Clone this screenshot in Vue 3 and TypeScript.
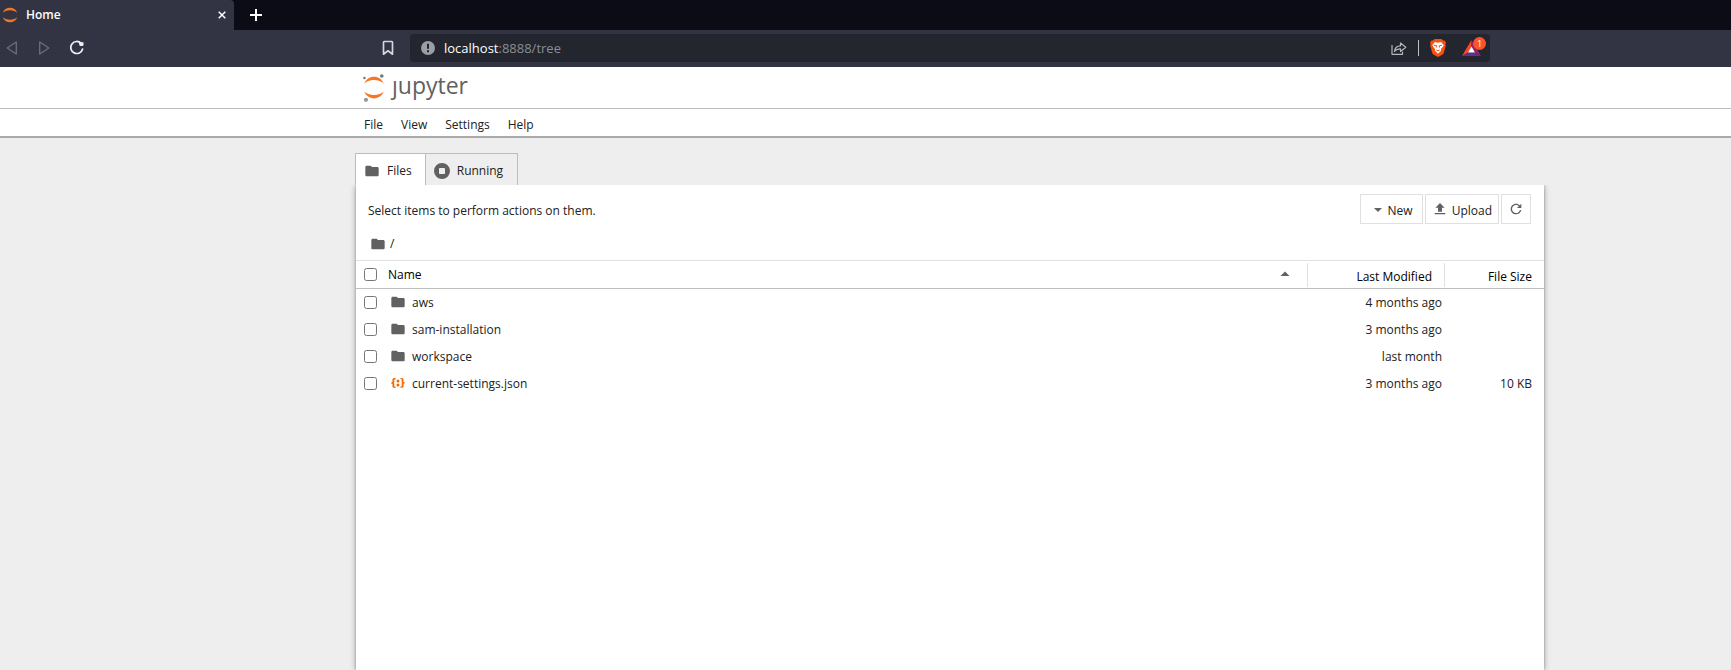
<script setup lang="ts">
import { ref, computed } from 'vue'

interface Entry {
  name: string
  kind: 'folder' | 'json'
  modified: string
  size: string
  checked: boolean
}

const menus: string[] = ['File', 'View', 'Settings', 'Help']
const address = ref('localhost:8888/tree')
const entries = ref<Entry[]>([
  { name: 'aws', kind: 'folder', modified: '4 months ago', size: '', checked: false },
  { name: 'sam-installation', kind: 'folder', modified: '3 months ago', size: '', checked: false },
  { name: 'workspace', kind: 'folder', modified: 'last month', size: '', checked: false },
  { name: 'current-settings.json', kind: 'json', modified: '3 months ago', size: '10 KB', checked: false },
])

const allChecked = computed<boolean>({
  get: () => entries.value.every((e) => e.checked),
  set: (value) => entries.value.forEach((e) => (e.checked = value)),
})

const folderPath =
  'M10 4H4c-1.1 0-1.99.9-1.99 2L2 18c0 1.1.9 2 2 2h16c1.1 0 2-.9 2-2V8c0-1.1-.9-2-2-2h-8l-2-2z'
</script>

<template>
  <div class="window">
    <div class="tabstrip">
      <div class="browser-tab">
        <svg class="favicon" width="16" height="16" viewBox="0 0 16 16" aria-hidden="true">
          <path d="M.8 5.8C2 2.6 4.700.8 8 .8s6 1.800 7.200 5C13.500 4.200 11 3.300 8 3.300S2.500 4.200.8 5.800z" fill="#f37726" />
          <path d="M.8 10.200C2 13.400 4.700 15.200 8 15.200s6-1.800 7.200-5c-1.700 1.600-4.200 2.500-7.200 2.500s-5.500-.9-7.200-2.500z" fill="#f37726" />
        </svg>
        <span class="tab-title">Home</span>
        <button class="chrome-btn close" aria-label="Close tab">
          <svg width="8" height="8" viewBox="0 0 8 8"><path d="M.7.7l6.600 6.600M7.300.7L.7 7.300" stroke="#fff" stroke-width="1.500" /></svg>
        </button>
      </div>
      <button class="chrome-btn new-tab" aria-label="New tab">
        <svg width="12" height="12" viewBox="0 0 12 12"><path d="M6 0v12M0 6h12" stroke="#fff" stroke-width="2" /></svg>
      </button>
    </div>

    <div class="navbar">
      <div class="nav-buttons">
        <button class="chrome-btn" aria-label="Back">
          <svg width="12" height="14" viewBox="0 0 12 14"><path d="M10.300 1v12L1.200 7z" fill="none" stroke="#6c6e7b" stroke-width="1.300" stroke-linejoin="round" /></svg>
        </button>
        <button class="chrome-btn" aria-label="Forward">
          <svg width="12" height="14" viewBox="0 0 12 14"><path d="M1.700 1v12l9.100-6z" fill="none" stroke="#6c6e7b" stroke-width="1.300" stroke-linejoin="round" /></svg>
        </button>
        <button class="chrome-btn" aria-label="Reload">
          <svg width="14" height="16" viewBox="1 0 14 16"><path d="M12.200 3.400A6 6 0 1 0 13.600 9" fill="none" stroke="#f0f0f3" stroke-width="1.700" stroke-linecap="round" /><path d="M9.800 2.200h4.700v2.600q0 1.200-1.200 1.200h-1.700q-1.300 0-1.300-1.200z" fill="#f0f0f3" /></svg>
        </button>
      </div>
      <button class="chrome-btn bookmark" aria-label="Bookmark this page">
        <svg width="12" height="16" viewBox="0 0 12 16"><path d="M2.200 1.500h7.600q.7 0 .7.700v12L6 10.800l-4.500 3.400v-12q0-.7.7-.7z" fill="none" stroke="#d4d5da" stroke-width="1.700" stroke-linejoin="round" /></svg>
      </button>
      <div class="address">
        <svg width="14" height="14" viewBox="0 0 14 14" aria-hidden="true"><circle cx="7" cy="7" r="7" fill="#9b9da7" /><path d="M6 2.800h2v5H6zM6 9.200h2v2H6z" fill="#23252f" /></svg>
        <a class="url" :href="'http://' + address"><span class="host">localhost</span>:8888/tree</a>
        <button class="chrome-btn" aria-label="Share">
          <svg width="16" height="14" viewBox="0 0 16 14"><path d="M1 4v9.300h10.500v-2.500M3.500 10.500c.4-3.800 2.500-5.500 6-5.600V2l5.300 4.300-5.300 4.200V7.800c-2.800 0-4.500.7-6 2.700z" fill="none" stroke="#b5b7bf" stroke-width="1.200" stroke-linejoin="round" /></svg>
        </button>
        <span class="divider"></span>
        <button class="chrome-btn" aria-label="Brave Shields">
          <svg width="16" height="18" viewBox="0 0 16 18">
            <path d="M4.500 0h7l1.500 1.500 1.500-.1L16 3.600l-.6 1.600.4 1.400-2 7.200q-.3 1-1.200 1.600L8 18l-4.600-2.600q-.9-.6-1.200-1.600L.2 6.600l.4-1.400L0 3.600l1.500-2.200 1.500.1z" fill="#fb4f0d" />
            <path d="M5 3l3 .7L11 3l2.700 3-.7 1.500-2.200 2.700.4 1.300L8 14.700l-3.200-3.200.4-1.300L3 7.500 2.300 6z" fill="#fff" />
            <path d="M3.800 6.200l3 .6-.4 1.700M12.200 6.200l-3 .6.4 1.700M6.300 11l1.700.9 1.700-.9" fill="none" stroke="#fb4f0d" stroke-width="1" />
          </svg>
        </button>
        <button class="chrome-btn rewards" aria-label="Brave Rewards">
          <svg width="19" height="16" viewBox="0 0 19 16">
            <path d="M9.500 0L0 16l6-3.500 3.500-6z" fill="#ff4724" />
            <path d="M9.500 0L19 16l-6-3.500-3.500-6z" fill="#9e1f63" />
            <path d="M0 16h19l-6-3.500H6z" fill="#662d91" />
            <path d="M9.500 6.500l3.500 6H6z" fill="#fff" />
          </svg>
          <span class="badge">1</span>
        </button>
      </div>
    </div>

    <header class="brand">
      <a class="logo" href="#" aria-label="jupyter">
        <svg width="22" height="28" viewBox="0 0 22 28" aria-hidden="true">
          <path d="M1.300 9.600C3 5.200 6.500 2.800 11 2.800s8 2.400 9.700 6.800C18.500 7.300 15 6.100 11 6.100S3.500 7.300 1.300 9.600z" fill="#f37726" />
          <path d="M1.300 17.600c1.700 4.400 5.200 6.800 9.700 6.800s8-2.400 9.700-6.800c-2.200 2.300-5.700 3.500-9.700 3.500s-7.500-1.200-9.700-3.500z" fill="#f37726" />
          <circle cx="18.800" cy="2" r="1.800" fill="#767677" /><circle cx="1.400" cy="4" r="1.200" fill="#767677" /><circle cx="3" cy="25.800" r="2.100" fill="#989798" />
        </svg>
        <span class="wordmark">ȷupyter</span>
      </a>
    </header>

    <nav class="menubar">
      <button v-for="m in menus" :key="m" class="menu">{{ m }}</button>
    </nav>

    <main class="workspace">
      <div class="tabs" role="tablist">
        <button class="tab active" role="tab" aria-selected="true">
          <svg class="icon" viewBox="0 0 24 24"><path :d="folderPath" /></svg>Files
        </button>
        <button class="tab" role="tab" aria-selected="false">
          <svg class="icon" viewBox="0 0 16 16"><path fill-rule="evenodd" d="M8 0a8 8 0 1 0 0 16A8 8 0 1 0 8 0zM5.800 5h4.400q.8 0 .8.8v4.400q0 .8-.8.8H5.800q-.8 0-.8-.8V5.800q0-.8.8-.8z" /></svg>Running
        </button>
      </div>

      <section class="panel">
        <div class="toolbar">
          <span class="hint">Select items to perform actions on them.</span>
          <button class="action new"><svg class="icon" viewBox="0 0 16 16"><path d="M4 7h8l-4 4z" /></svg><span class="label">New</span></button>
          <button class="action upload"><svg class="icon" viewBox="0 0 24 24"><path d="M4 20h16v-2H4v2zm1-10h4v6h6v-6h4l-7-7-7 7z" /></svg><span class="label">Upload</span></button>
          <button class="action" aria-label="Refresh the file list"><svg class="icon" viewBox="0 0 18 18"><path d="M9 13.500c-2.490 0-4.500-2.010-4.500-4.500S6.510 4.500 9 4.500c1.240 0 2.360.52 3.170 1.330L10 8h5V3l-1.760 1.760C12.150 3.680 10.660 3 9 3 5.690 3 3.010 5.690 3.010 9S5.690 15 9 15c2.970 0 5.430-2.160 5.900-5h-1.520c-.46 2-2.240 3.500-4.380 3.500z" /></svg></button>
        </div>

        <div class="crumbs">
          <svg class="icon" viewBox="0 0 24 24" aria-hidden="true"><path :d="folderPath" /></svg>
          <a href="#">/</a>
        </div>

        <table class="files">
          <thead>
            <tr>
              <th class="check"><input v-model="allChecked" type="checkbox" aria-label="Select all" /></th>
              <th class="name">
                <div class="sort">Name<svg class="icon" viewBox="0 0 16 16"><path d="M3.500 10h9L8 5.500z" /></svg></div>
              </th>
              <th class="modified"><div class="sep">Last Modified</div></th>
              <th class="size"><div class="sep">File Size</div></th>
            </tr>
          </thead>
          <tbody>
            <tr v-for="e in entries" :key="e.name">
              <td class="check"><input v-model="e.checked" type="checkbox" :aria-label="'Select ' + e.name" /></td>
              <td class="name">
                <div class="item">
                  <svg v-if="e.kind === 'folder'" class="icon" viewBox="0 0 24 24" aria-hidden="true"><path :d="folderPath" /></svg>
                  <svg v-else class="icon json" viewBox="0 0 22 22" aria-hidden="true">
                    <path d="M20.200 11.800c-1.600 0-1.700.5-1.700 1 0 .4.1.9.1 1.300.1.5.1.9.1 1.300 0 1.700-1.400 2.300-3.500 2.300h-.9v-1.900h.5c1.100 0 1.400 0 1.400-.8 0-.3 0-.6-.1-1 0-.4-.1-.8-.1-1.200 0-1.300 0-1.800 1.300-2-1.300-.2-1.300-.7-1.300-2 0-.4.1-.8.1-1.200.1-.4.1-.7.1-1 0-.8-.4-.7-1.400-.8h-.5V4.100h.9c2.200 0 3.500.7 3.500 2.300 0 .4-.1.9-.1 1.300-.1.5-.1.9-.1 1.300 0 .5.2 1 1.700 1v1.800zM1.800 10.100c1.600 0 1.700-.5 1.700-1 0-.4-.1-.9-.1-1.300-.1-.5-.1-.9-.1-1.300 0-1.600 1.400-2.300 3.500-2.300h.9v1.900h-.5c-1 0-1.400 0-1.400.8 0 .3 0 .6.1 1 0 .2.1.6.1 1 0 1.300 0 1.800-1.300 2C6 11.200 6 11.700 6 13c0 .4-.1.8-.1 1.200-.1.3-.1.7-.1 1 0 .8.3.8 1.400.8h.5v1.900h-.9c-2.100 0-3.500-.6-3.500-2.300 0-.4.1-.9.1-1.300.1-.5.1-.9.1-1.300 0-.5-.2-1-1.700-1v-1.900z" />
                    <circle cx="11" cy="13.800" r="2.100" /><circle cx="11" cy="8.200" r="2.100" />
                  </svg>
                  <span>{{ e.name }}</span>
                </div>
              </td>
              <td class="modified">{{ e.modified }}</td>
              <td class="size">{{ e.size }}</td>
            </tr>
          </tbody>
        </table>
      </section>
    </main>
  </div>
</template>

<style>
body {
  margin: 0;
  background: #eee;
}
</style>

<style scoped>
* {
  box-sizing: border-box;
}
.window {
  display: flex;
  flex-direction: column;
  height: 100vh;
  overflow: hidden;
  font-family: 'Open Sans', 'Noto Sans', sans-serif;
  font-size: 12px;
  line-height: 18px;
  color: #212121;
}
button {
  font: inherit;
  color: inherit;
  background: none;
  border: 0;
  padding: 0;
}
a {
  color: inherit;
  text-decoration: none;
}
svg {
  display: block;
  flex: none;
}
.chrome-btn {
  display: flex;
  align-items: center;
  justify-content: center;
}
.tabstrip {
  display: flex;
  flex: none;
  height: 30px;
  background: #0b0c15;
}
.browser-tab {
  display: flex;
  align-items: center;
  width: 234px;
  padding: 0 8px 0 2px;
  background: #323443;
  border-top-right-radius: 4px;
  color: #fff;
}
.tab-title {
  flex: 1;
  padding-left: 8px;
  font-weight: 600;
}
.new-tab {
  padding-left: 16px;
}
.navbar {
  display: flex;
  flex: none;
  align-items: center;
  height: 37px;
  padding: 0 241px 1px 6px;
  background: #323443;
}
.nav-buttons {
  display: flex;
  align-items: center;
  gap: 20px;
  width: 376px;
}
.bookmark {
  width: 12px;
  margin-right: 16px;
}
.address {
  display: flex;
  flex: 1;
  align-items: center;
  height: 28px;
  padding: 0 4px 0 11px;
  background: #23252f;
  border-radius: 4px;
}
.url {
  flex: 1;
  padding-left: 9px;
  font-size: 13px;
  color: #8b8d93;
}
.host {
  color: #fff;
}
.divider {
  width: 1px;
  height: 16px;
  margin: 0 11px;
  background: #c0c1c8;
}
.rewards {
  position: relative;
  width: 24px;
  justify-content: flex-start;
  margin-left: 16px;
}
.badge {
  position: absolute;
  top: -3px;
  right: 0;
  width: 13px;
  height: 13px;
  border-radius: 7px;
  background: #fb542b;
  color: #fff;
  font-size: 9px;
  line-height: 13px;
  text-align: center;
}
.brand {
  flex: none;
  height: 42px;
  padding: 7px 0 0 363px;
  background: #fff;
  border-bottom: 1px solid #bdbdbd;
}
.logo {
  display: inline-flex;
  gap: 7px;
  color: #616161;
}
.wordmark {
  font-size: 23px;
  line-height: 22px;
}
.menubar {
  display: flex;
  flex: none;
  gap: 2px;
  height: 29px;
  padding-left: 356px;
  background: #fff;
  border-bottom: 2px solid #aaa;
  box-shadow: 0 1px 2px rgba(0, 0, 0, 0.1);
}
.menu {
  padding: 4px 8px 0;
}
.workspace {
  display: flex;
  flex: 1;
  flex-direction: column;
  min-height: 0;
  padding: 15px 187px 0 355px;
  background: #eee;
}
.tabs {
  display: flex;
  flex: none;
  height: 32px;
}
.tab {
  display: flex;
  align-items: center;
  gap: 7px;
  padding: 2px 14px 0 8px;
  border: 1px solid #bdbdbd;
  border-left: 0;
  border-bottom: 0;
}
.tab.active {
  padding-right: 13px;
  border-left: 1px solid #bdbdbd;
  background: #fff;
}
.icon {
  width: 16px;
  height: 16px;
  fill: #616161;
}
.icon.json {
  fill: #ef6c00;
}
.panel {
  flex: 1;
  margin-left: 1px;
  background: #fff;
  box-shadow: 0 0 2px rgba(0, 0, 0, 0.25), 0 1px 6px rgba(0, 0, 0, 0.35);
  clip-path: inset(0 -12px 0 -12px);
}
.toolbar {
  display: flex;
  gap: 2px;
  padding: 9px 13px 0 12px;
}
.hint {
  flex: 1;
  line-height: 33px;
}
.action {
  display: flex;
  align-items: center;
  height: 30px;
  padding: 0 6px;
  border: 1px solid #e0e0e0;
}
.label {
  padding-top: 3px;
}
.new {
  gap: 2px;
  padding: 0 9px;
}
.upload {
  gap: 4px;
}
.crumbs {
  display: flex;
  align-items: center;
  gap: 4px;
  height: 33px;
  padding-left: 14px;
}
.files {
  width: 100%;
  table-layout: fixed;
  border-collapse: collapse;
}
.files th,
.files td {
  height: 27px;
  padding: 2px 0 0;
  text-align: left;
}
.files thead th {
  height: 28px;
  padding-top: 0;
  border-top: 1px solid #e0e0e0;
  border-bottom: 1px solid #bdbdbd;
  font-weight: 500;
  color: #000;
}
.files .check {
  width: 32px;
  padding: 0 0 0 8px;
}
.check input {
  display: block;
  width: 13px;
  height: 13px;
  margin: 0;
}
.sort {
  display: flex;
  justify-content: space-between;
  padding: 1px 14px 0 0;
}
.item {
  display: flex;
  align-items: flex-start;
  gap: 6px;
  padding-left: 2px;
}
.files .modified {
  width: 137px;
  text-align: right;
  padding-right: 2px;
}
.files .size {
  width: 100px;
  text-align: right;
  padding-right: 12px;
}
.files thead .modified {
  padding-right: 0;
}
.sep {
  height: 24px;
  border-left: 1px solid #e0e0e0;
  line-height: 28px;
}
.modified .sep {
  padding-right: 12px;
}
</style>
